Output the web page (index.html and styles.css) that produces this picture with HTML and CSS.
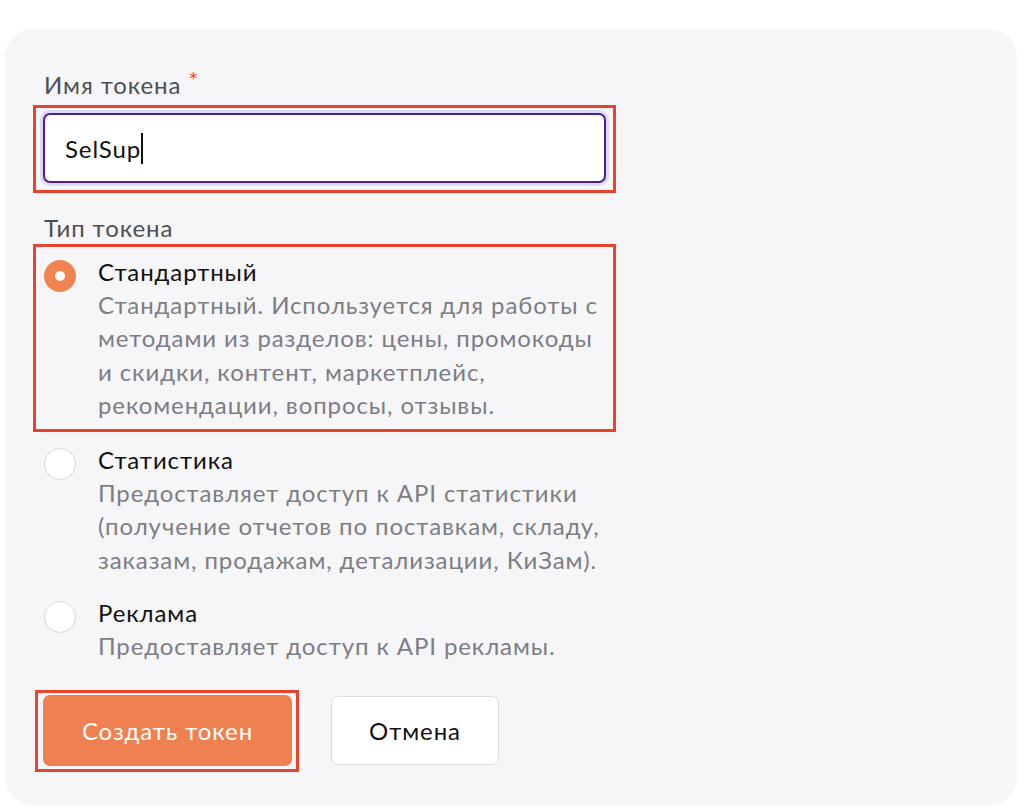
FILE: index.html
```html
<!DOCTYPE html>
<html lang="ru">
<head>
<meta charset="utf-8">
<title>Создание токена</title>
<link rel="stylesheet" href="styles.css">
</head>
<body>
<div class="card">
  <div class="field-label">Имя токена <span class="req">*</span></div>
  <div class="mark mark-input">
    <div class="input"><span class="input-text">SelSup</span><span class="caret"></span></div>
  </div>

  <div class="field-label type-label">Тип токена</div>
  <div class="options">
    <div class="mark mark-option">
      <div class="option">
        <span class="radio checked"></span>
        <div class="option-body">
          <div class="option-title">Стандартный</div>
          <div class="option-desc">Стандартный. Используется для работы с методами из разделов: цены, промокоды и скидки, контент, маркетплейс, рекомендации, вопросы, отзывы.</div>
        </div>
      </div>
    </div>
    <div class="option plain">
      <span class="radio"></span>
      <div class="option-body">
        <div class="option-title">Статистика</div>
        <div class="option-desc">Предоставляет доступ к API статистики (получение отчетов по поставкам, складу, заказам, продажам, детализации, КиЗам).</div>
      </div>
    </div>
    <div class="option plain last">
      <span class="radio"></span>
      <div class="option-body">
        <div class="option-title">Реклама</div>
        <div class="option-desc">Предоставляет доступ к API рекламы.</div>
      </div>
    </div>
  </div>

  <div class="actions">
    <div class="mark mark-button">
      <button class="btn btn-primary">Создать токен</button>
    </div>
    <button class="btn btn-secondary">Отмена</button>
  </div>
</div>
</body>
</html>
```
FILE: styles.css
```css
* { box-sizing: border-box; }
html, body { margin: 0; padding: 0; background: #ffffff; }
body {
  font-family: Lato, "Open Sans", "Noto Sans", sans-serif;
  width: 1024px;
  height: 812px;
  overflow: hidden;
  padding: 29px 7px 0 5px;
}
.card {
  background: #f6f6f8;
  border-radius: 28px;
  height: 776px;
  padding: 39px 38px 0 38px;
}
.field-label {
  font-size: 24px;
  letter-spacing: 0.9px;
  line-height: 33px;
  color: #4e4e55;
  padding-left: 1px;
  height: 33px;
  display: flex;
  align-items: center;
}
.req {
  color: #f0553d;
  font-size: 24px;
  margin-left: 7px;
  align-self: flex-start;
  line-height: 24px;
  margin-top: 0;
}
.mark {
  border: 3px solid #e8432d;
}
.mark-input {
  margin: 4px 0 0 -10px;
  width: 583px;
  padding: 5px 7px 7px 7px;
}
.input {
  height: 70px;
  background: #fff;
  border: 2px solid #4b1e9e;
  border-radius: 7px;
  box-shadow: 0 0 0 3px #dcdaf4;
  display: flex;
  align-items: center;
  padding-left: 20px;
  font-size: 24px;
  letter-spacing: 0.9px;
  color: #111;
}
.caret { width: 1.5px; height: 31px; background: #111; margin-left: 0; }
.type-label { margin-top: 18px; }
.options { display: flex; flex-direction: column; }
.mark-option {
  margin-left: -10px;
  width: 583px;
  padding: 8px 8px 8px 8px;
}
.option { display: flex; gap: 22px; }
.option.plain { padding: 11px 0 11px 0; margin-left: 1px; }
.option.plain.last { padding-top: 9px; }
.radio {
  flex: none;
  width: 32px;
  height: 32px;
  border-radius: 50%;
  background: #fff;
  border: 1.5px solid #d9d9de;
  margin-top: 5px;
}
.radio.checked {
  background: #f0834f;
  border: none;
  position: relative;
}
.radio.checked::after {
  content: "";
  position: absolute;
  left: 11px; top: 11px;
  width: 10px; height: 10px;
  border-radius: 50%;
  background: #fff;
}
.option-body {
  font-size: 24px;
  letter-spacing: 0.9px;
  line-height: 33.2px;
  width: 510px;
}
.option-title { color: #111; }
.option-desc { color: #7d7d84; }
.actions {
  display: flex;
  align-items: flex-start;
  gap: 32px;
  margin-top: 17px;
  margin-left: -8px;
}
.mark-button { padding: 2px 4px 3px 5px; }
.btn {
  font-family: inherit;
  font-size: 24px;
  letter-spacing: 0.9px;
  height: 71px;
  border-radius: 7px;
  cursor: pointer;
}
.btn-primary {
  width: 249px;
  background: #ef8150;
  color: #fff;
  border: none;
}
.btn-secondary {
  margin-top: 6px;
  width: 168px;
  height: 69px;
  background: #fff;
  color: #111;
  border: 1.5px solid #dcdce1;
}
```
